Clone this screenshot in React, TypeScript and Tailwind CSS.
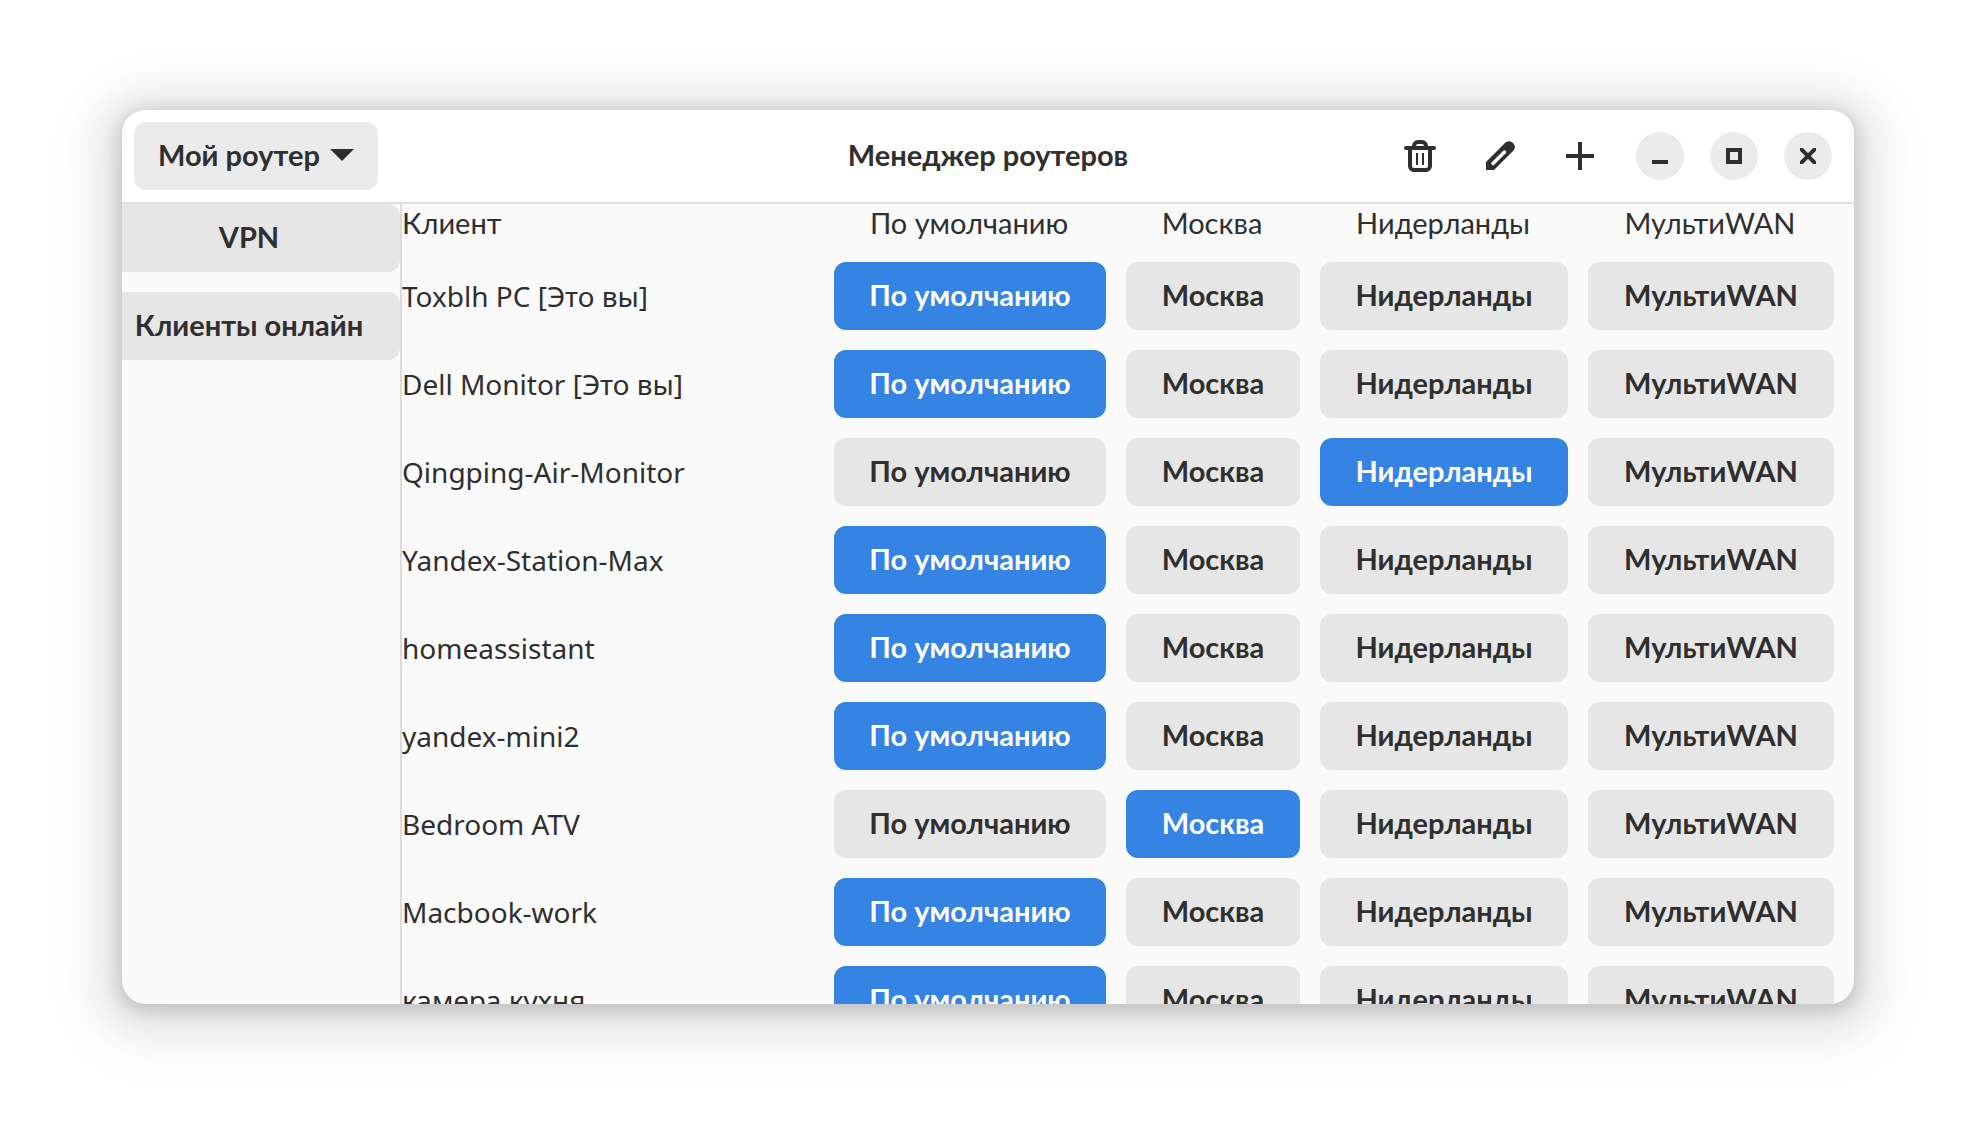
import { useState, type ReactNode } from "react";

const routes = ["По умолчанию", "Москва", "Нидерланды", "МультиWAN"];

const initialClients = [
  { name: "Toxblh PC [Это вы]", route: 0 },
  { name: "Dell Monitor [Это вы]", route: 0 },
  { name: "Qingping-Air-Monitor", route: 2 },
  { name: "Yandex-Station-Max", route: 0 },
  { name: "homeassistant", route: 0 },
  { name: "yandex-mini2", route: 0 },
  { name: "Bedroom ATV", route: 1 },
  { name: "Macbook-work", route: 0 },
  { name: "камера кухня", route: 0 },
];

function ToolButton({ label, children }: { label: string; children: ReactNode }) {
  return (
    <button
      type="button"
      aria-label={label}
      className="flex size-[68px] items-center justify-center rounded-xl hover:bg-[#ebebeb]"
    >
      <svg viewBox="0 0 32 32" className="size-8" aria-hidden="true">
        {children}
      </svg>
    </button>
  );
}

function WindowButton({ label, children }: { label: string; children: ReactNode }) {
  return (
    <button
      type="button"
      aria-label={label}
      className="flex size-12 items-center justify-center rounded-full bg-[#ebebeb]"
    >
      <svg viewBox="0 0 16 16" className="size-4" fill="none" stroke="currentColor" strokeWidth="4" aria-hidden="true">
        {children}
      </svg>
    </button>
  );
}

function HeaderBar() {
  return (
    <header className="grid shrink-0 grid-cols-[1fr_auto_1fr] items-center border-b-2 border-[#dfdfdf] bg-white p-3">
      <button
        type="button"
        aria-haspopup="menu"
        className="flex h-[68px] items-center gap-2.5 justify-self-start rounded-xl bg-[#ebebeb] px-6 pb-0.5 font-bold"
      >
        Мой роутер
        <svg viewBox="0 0 24 12" className="h-3 w-6" fill="currentColor" aria-hidden="true">
          <path d="M0 0h24L12 12z" />
        </svg>
      </button>
      <h1 className="pb-0.5 font-bold whitespace-nowrap">Менеджер роутеров</h1>
      <div className="flex items-center gap-[22px] justify-self-end pr-2.5">
        <div className="flex gap-3">
          <ToolButton label="Удалить">
            <g fill="none" stroke="currentColor" strokeWidth="4">
              <path d="M2 8h28" strokeLinecap="round" />
              <path d="M10 8V6a4 4 0 0 1 4-4h4a4 4 0 0 1 4 4v2" />
              <path d="M6 8v18a4 4 0 0 0 4 4h12a4 4 0 0 0 4-4V8" />
              <path d="M13 13v12M19 13v12" strokeWidth="2" />
            </g>
          </ToolButton>
          <ToolButton label="Изменить">
            <path
              d="M2 30v-8L21.5 2.600a5.700 5.700 0 0 1 8 8L10 30z"
              fill="currentColor"
            />
            <path d="M9 23.500 20.500 12" stroke="white" strokeWidth="3.400" strokeLinecap="round" />
          </ToolButton>
          <ToolButton label="Добавить">
            <path d="M16 2v28M2 16h28" stroke="currentColor" strokeWidth="4" />
          </ToolButton>
        </div>
        <div className="flex gap-[26px]">
          <WindowButton label="Свернуть">
            <path d="M0 14h16" />
          </WindowButton>
          <WindowButton label="Развернуть">
            <path d="M2 2h12v12H2z" />
          </WindowButton>
          <WindowButton label="Закрыть">
            <path d="M0 0l16 16M16 0L0 16" />
          </WindowButton>
        </div>
      </div>
    </header>
  );
}

function Sidebar() {
  return (
    <nav className="flex w-[280px] shrink-0 flex-col gap-5 border-r-2 border-[#dbdbdb]">
      {["VPN", "Клиенты онлайн"].map((label) => (
        <button
          key={label}
          type="button"
          className="h-[68px] rounded-r-xl bg-[#e6e6e6] pr-6 pb-0.5 font-bold whitespace-nowrap"
        >
          {label}
        </button>
      ))}
    </nav>
  );
}

function ClientTable() {
  const [clients, setClients] = useState(initialClients);
  const select = (row: number, route: number) =>
    setClients(clients.map((c, i) => (i === row ? { ...c, route } : c)));

  return (
    <div className="min-w-0 flex-1 overflow-hidden pr-5">
      <table className="w-full table-fixed border-collapse">
        <colgroup>
          <col />
          <col className="w-[292px]" />
          <col className="w-[194px]" />
          <col className="w-[268px]" />
          <col className="w-[266px]" />
        </colgroup>
        <thead>
          <tr>
            <th scope="col" className="h-[38px] p-0 text-left font-normal">
              Клиент
            </th>
            {routes.map((route) => (
              <th key={route} scope="col" className="h-[38px] p-0 pl-[18px] text-center font-normal">
                {route}
              </th>
            ))}
          </tr>
        </thead>
        <tbody>
          {clients.map((client, row) => (
            <tr key={client.name}>
              <th
                scope="row"
                className="p-0 pt-5 text-left font-['Noto_Sans',sans-serif] text-[28px] leading-[38px] font-normal whitespace-nowrap"
              >
                {client.name}
              </th>
              {routes.map((route, i) => (
                <td key={route} className="p-0 pt-5 pl-5">
                  <button
                    type="button"
                    aria-pressed={client.route === i}
                    onClick={() => select(row, i)}
                    className={
                      client.route === i
                        ? "block h-[68px] w-full rounded-xl bg-[#3584e4] pb-0.5 font-bold text-white"
                        : "block h-[68px] w-full rounded-xl bg-[#e6e6e6] pb-0.5 font-bold"
                    }
                  >
                    {route}
                  </button>
                </td>
              ))}
            </tr>
          ))}
        </tbody>
      </table>
    </div>
  );
}

export default function App() {
  return (
    <div className="flex h-screen bg-white px-[122px] pt-[110px] pb-[134px] font-[Lato,'Noto_Sans',sans-serif] text-[29px] leading-[38px] text-[#2f2f2f]">
      <main className="flex min-w-0 flex-1 flex-col overflow-hidden rounded-3xl bg-[#fafafa] shadow-[0_4px_16px_4px_rgba(0,0,0,0.13),0_6px_40px_20px_rgba(0,0,0,0.09),0_12px_64px_32px_rgba(0,0,0,0.04)]">
        <HeaderBar />
        <div className="flex min-h-0 flex-1">
          <Sidebar />
          <ClientTable />
        </div>
      </main>
    </div>
  );
}
